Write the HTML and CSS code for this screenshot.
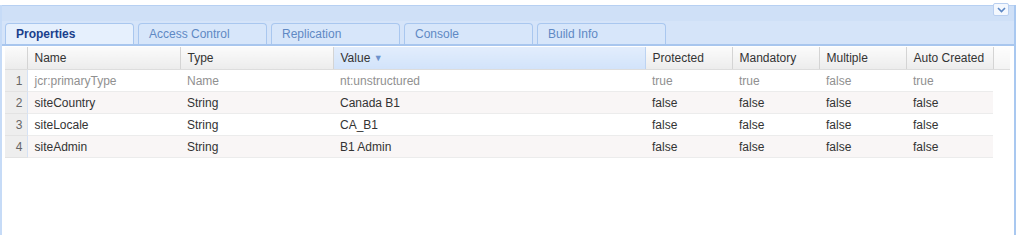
FILE: index.html
```html
<!DOCTYPE html>
<html lang="en">
<head>
    <meta charset="UTF-8">
    <title>CRXDE Properties</title>
    <link rel="stylesheet" href="styles.css">
</head>
<body>

<div class="panel">
    <div class="panel-top">
        <span class="collapse-btn">
            <svg width="9" height="6" viewBox="0 0 9 6"><path d="M1 1 L4.5 4.5 L8 1" fill="none" stroke="#5b86c4" stroke-width="1.6"/></svg>
        </span>
    </div>
    <div class="tab-strip">
        <div class="tab active">Properties</div>
        <div class="tab">Access Control</div>
        <div class="tab">Replication</div>
        <div class="tab">Console</div>
        <div class="tab">Build Info</div>
    </div>
    <div class="grid">
        <table class="props">
            <colgroup>
                <col class="c-num">
                <col class="c-name">
                <col class="c-type">
                <col class="c-value">
                <col class="c-flag">
                <col class="c-flag">
                <col class="c-flag">
                <col class="c-flag">
                <col class="c-fill">
            </colgroup>
            <thead>
                <tr>
                    <th class="num"></th>
                    <th>Name</th>
                    <th>Type</th>
                    <th class="sorted">Value <span class="sort-arrow">&#9660;</span></th>
                    <th>Protected</th>
                    <th>Mandatory</th>
                    <th>Multiple</th>
                    <th>Auto Created</th>
                    <th class="filler"></th>
                </tr>
            </thead>
            <tbody>
                <tr class="protected">
                    <td class="num">1</td>
                    <td>jcr:primaryType</td>
                    <td>Name</td>
                    <td>nt:unstructured</td>
                    <td>true</td>
                    <td>true</td>
                    <td>false</td>
                    <td>true</td>
                    <td class="filler"></td>
                </tr>
                <tr class="alt">
                    <td class="num">2</td>
                    <td>siteCountry</td>
                    <td>String</td>
                    <td>Canada B1</td>
                    <td>false</td>
                    <td>false</td>
                    <td>false</td>
                    <td>false</td>
                    <td class="filler"></td>
                </tr>
                <tr>
                    <td class="num">3</td>
                    <td>siteLocale</td>
                    <td>String</td>
                    <td>CA_B1</td>
                    <td>false</td>
                    <td>false</td>
                    <td>false</td>
                    <td>false</td>
                    <td class="filler"></td>
                </tr>
                <tr class="alt">
                    <td class="num">4</td>
                    <td>siteAdmin</td>
                    <td>String</td>
                    <td>B1 Admin</td>
                    <td>false</td>
                    <td>false</td>
                    <td>false</td>
                    <td>false</td>
                    <td class="filler"></td>
                </tr>
            </tbody>
        </table>
    </div>
</div>

</body>
</html>
```

FILE: styles.css
```css
body {
    margin: 0;
    padding-top: 5px;
    font-family: "Liberation Sans", Arial, sans-serif;
    font-size: 12px;
    background-color: #ffffff;
}
.panel {
    width: 1012px;
    height: 230px;
    border-left: 2px solid #c6dbf7;
    border-right: 2px solid #a9c8f0;
    background-color: #ffffff;
    display: flex;
    flex-direction: column;
}
.panel-top {
    height: 15px;
    background-color: #cfe0f7;
    border-top: 1px solid #b7d0f2;
    display: flex;
    justify-content: flex-end;
    align-items: flex-start;
    padding-right: 5px;
}
.collapse-btn {
    width: 14px;
    height: 11px;
    margin-top: -3px;
    background-color: #f4f8fe;
    border: 1px solid #b9cff0;
    border-radius: 2px;
    display: flex;
    justify-content: center;
    align-items: center;
}
.tab-strip {
    height: 23px;
    background-color: #d5e4f9;
    border-bottom: 2px solid #a8c6ee;
    display: flex;
    align-items: flex-end;
    gap: 4px;
    padding-left: 3px;
}
.tab {
    width: 117px;
    height: 20px;
    line-height: 20px;
    padding-left: 10px;
    border: 1px solid #a9c7ef;
    border-bottom: none;
    border-radius: 4px 4px 0 0;
    background-color: #d7e6fa;
    color: #6089c4;
}
.tab.active {
    background-color: #e6f0fd;
    color: #1a3f8c;
    font-weight: bold;
}
.grid {
    padding: 1px 0 0 3px;
}
.props {
    table-layout: fixed;
    border-collapse: collapse;
    width: 1005px;
}
.c-num { width: 22px; }
.c-name { width: 153px; }
.c-type { width: 153px; }
.c-value { width: 312px; }
.c-flag { width: 87px; }
.c-fill { width: 17px; }
.props th {
    height: 22px;
    padding: 0 0 0 7px;
    text-align: left;
    font-weight: normal;
    color: #333333;
    background: linear-gradient(#fbfbfb, #ececec);
    border-right: 1px solid #d4d4d4;
    border-bottom: 1px solid #dddddd;
    white-space: nowrap;
    overflow: hidden;
}
.props th.sorted {
    background: linear-gradient(#e2edfc, #d2e3fa);
    border-right-color: #bcd3f2;
}
.props th.filler {
    border-right: none;
    background: linear-gradient(#fdfdfd, #f3f3f3);
}
.sort-arrow {
    font-size: 9px;
    color: #6d92cc;
    vertical-align: 1px;
}
.props td {
    height: 21px;
    padding: 0 0 0 7px;
    color: #333333;
    border-bottom: 1px solid #ececec;
    white-space: nowrap;
    overflow: hidden;
}
.props td.num {
    padding: 0 4px 0 0;
    text-align: right;
    color: #666666;
    background-color: #eeeeee;
    border-right: 1px solid #d5e2f5;
    border-bottom: 1px solid #e3e3e3;
}
.props td.filler {
    background-color: #ffffff;
    border-bottom: none;
}
.props tr.alt td {
    background-color: #f9f6f6;
}
.props tr.alt td.num {
    background-color: #eeeeee;
}
.props tr.alt td.filler {
    background-color: #ffffff;
}
.props tr.protected td {
    color: #909090;
}
.props tr.protected td.num {
    color: #666666;
}
```
